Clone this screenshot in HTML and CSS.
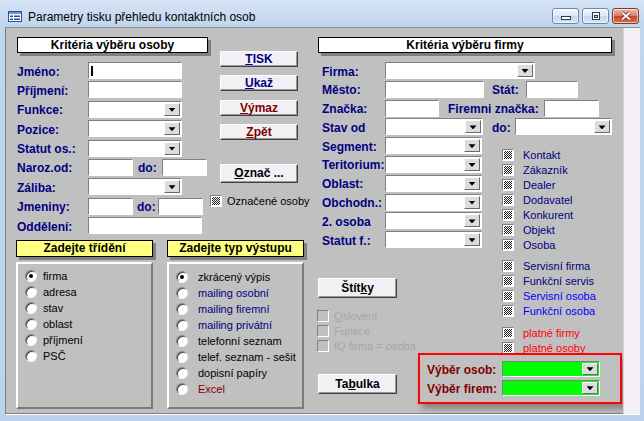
FILE: index.html
```html
<!DOCTYPE html>
<html lang="cs">
<head>
<meta charset="utf-8">
<title>Parametry tisku přehledu kontaktních osob</title>
<link rel="stylesheet" href="styles.css">
</head>
<body>
<div class="window">
  <div class="titlebar">
    <svg class="appicon" width="14" height="11" viewBox="0 0 14 11">
      <rect x="0.5" y="0.5" width="13" height="10" fill="#fff" stroke="#2a4f8f"/>
      <rect x="1" y="1" width="12" height="2" fill="#6f94cc"/>
      <rect x="2" y="4.5" width="3" height="1.5" fill="#2a4f8f"/>
      <rect x="6" y="4.5" width="6" height="1.5" fill="#2a4f8f"/>
      <rect x="2" y="7.5" width="3" height="1.5" fill="#2a4f8f"/>
      <rect x="6" y="7.5" width="6" height="1.5" fill="#2a4f8f"/>
    </svg>
    <span class="title">Parametry tisku přehledu kontaktních osob</span>
    <div class="winbtns">
      <div class="wb">
        <svg width="12" height="10" viewBox="0 0 12 10"><rect x="1.5" y="5.5" width="9" height="3" fill="#fff" stroke="#2b3a55"/></svg>
      </div>
      <div class="wb">
        <svg width="12" height="10" viewBox="0 0 12 10"><rect x="2.5" y="1.5" width="7" height="7" fill="none" stroke="#2b3a55"/><rect x="3.5" y="2.5" width="5" height="5" fill="none" stroke="#fff"/><rect x="4.5" y="4.5" width="3" height="2" fill="none" stroke="#2b3a55"/></svg>
      </div>
      <div class="wb close">
        <svg width="12" height="10" viewBox="0 0 12 10"><path d="M2 1.5 L10 8.5 M10 1.5 L2 8.5" stroke="#6b2a1c" stroke-width="3.4"/><path d="M2 1.5 L10 8.5 M10 1.5 L2 8.5" stroke="#fff" stroke-width="1.8"/></svg>
      </div>
    </div>
  </div>

  <div class="frame">
    <div class="client">
      <div class="colA">
        <div class="topA">
          <div class="persons">
            <div class="hdr">Kritéria výběru osoby</div>
            <div class="fields fields-a">
              <div class="row"><span class="lbl">Jméno:</span><span class="inp text w94"><span class="caret"></span></span></div>
              <div class="row"><span class="lbl">Příjmení:</span><span class="inp w94"></span></div>
              <div class="row"><span class="lbl">Funkce:</span><span class="inp w94"><span class="dd"></span></span></div>
              <div class="row"><span class="lbl">Pozice:</span><span class="inp w94"><span class="dd"></span></span></div>
              <div class="row"><span class="lbl">Statut os.:</span><span class="inp w94"><span class="dd"></span></span></div>
              <div class="row"><span class="lbl">Naroz.od:</span><span class="inp w45"></span><span class="lbl do1">do:</span><span class="inp w45"></span></div>
              <div class="row"><span class="lbl">Záliba:</span><span class="inp w94"><span class="dd"></span></span></div>
              <div class="row"><span class="lbl">Jmeniny:</span><span class="inp w45"></span><span class="lbl do2">do:</span><span class="inp w45"></span></div>
              <div class="row"><span class="lbl">Oddělení:</span><span class="inp w114"></span></div>
            </div>
          </div>
          <div class="actions">
            <div class="btn navy first"><u>T</u>ISK</div>
            <div class="btn navy"><u>U</u>kaž</div>
            <div class="btn maroon"><u>V</u>ýmaz</div>
            <div class="btn maroon"><u>Z</u>pět</div>
            <div class="btn tall oznac"><u>O</u>znač ...</div>
            <div class="check marked"><span class="chk on"></span><span class="ctext">Označené osoby</span></div>
          </div>
        </div>
        <div class="bottomA">
          <div class="grp sort">
            <div class="ghdr">Zadejte třídění</div>
            <div class="panel">
              <div class="opt"><span class="radio on"></span>firma</div>
              <div class="opt"><span class="radio"></span>adresa</div>
              <div class="opt"><span class="radio"></span>stav</div>
              <div class="opt"><span class="radio"></span>oblast</div>
              <div class="opt"><span class="radio"></span>příjmení</div>
              <div class="opt"><span class="radio"></span>PSČ</div>
            </div>
          </div>
          <div class="grp out">
            <div class="ghdr">Zadejte typ výstupu</div>
            <div class="panel">
              <div class="opt"><span class="radio on"></span>zkrácený výpis</div>
              <div class="opt navy-t"><span class="radio"></span>mailing osobní</div>
              <div class="opt navy-t"><span class="radio"></span>mailing firemní</div>
              <div class="opt navy-t"><span class="radio"></span>mailing privátní</div>
              <div class="opt"><span class="radio"></span>telefonní seznam</div>
              <div class="opt"><span class="radio"></span>telef. seznam - sešit</div>
              <div class="opt"><span class="radio"></span>dopisní papíry</div>
              <div class="opt maroon-t"><span class="radio"></span>Excel</div>
            </div>
          </div>
        </div>
      </div>

      <div class="colB">
        <div class="hdr hdr-b">Kritéria výběru firmy</div>
        <div class="fields fields-b">
          <div class="row"><span class="lbl">Firma:</span><span class="inp w150"><span class="dd"></span></span></div>
          <div class="row"><span class="lbl">Město:</span><span class="inp w99"></span><span class="lbl stat">Stát:</span><span class="inp w52"></span></div>
          <div class="row"><span class="lbl">Značka:</span><span class="inp w54"></span><span class="lbl fzn">Firemni značka:</span><span class="inp w55"></span></div>
          <div class="row"><span class="lbl">Stav od</span><span class="inp w98"><span class="dd"></span></span><span class="lbl do3">do:</span><span class="inp w97"><span class="dd"></span></span></div>
          <div class="split">
            <div class="sleft">
              <div class="fields fields-s">
                <div class="row"><span class="lbl">Segment:</span><span class="inp w97"><span class="dd"></span></span></div>
                <div class="row"><span class="lbl">Teritorium:</span><span class="inp w97"><span class="dd"></span></span></div>
                <div class="row"><span class="lbl">Oblast:</span><span class="inp w97"><span class="dd"></span></span></div>
                <div class="row"><span class="lbl">Obchodn.:</span><span class="inp w97"><span class="dd"></span></span></div>
                <div class="row"><span class="lbl">2. osoba</span><span class="inp w97"><span class="dd"></span></span></div>
                <div class="row"><span class="lbl">Statut f.:</span><span class="inp w97"><span class="dd"></span></span></div>
              </div>
              <div class="btn big stitky">Štít<u>k</u>y</div>
              <div class="dischecks">
                <div class="check dis"><span class="chk"></span><span class="ctext"><u>O</u>slovení</span></div>
                <div class="check dis"><span class="chk"></span><span class="ctext">Funkce</span></div>
                <div class="check dis"><span class="chk"></span><span class="ctext">IQ firma = osoba</span></div>
              </div>
            </div>
            <div class="sright">
              <div class="cgroup">
                <div class="check navy-t"><span class="chk on"></span><span class="ctext">Kontakt</span></div>
                <div class="check navy-t"><span class="chk on"></span><span class="ctext">Zákazník</span></div>
                <div class="check navy-t"><span class="chk on"></span><span class="ctext">Dealer</span></div>
                <div class="check navy-t"><span class="chk on"></span><span class="ctext">Dodavatel</span></div>
                <div class="check navy-t"><span class="chk on"></span><span class="ctext">Konkurent</span></div>
                <div class="check navy-t"><span class="chk on"></span><span class="ctext">Objekt</span></div>
                <div class="check navy-t"><span class="chk on"></span><span class="ctext">Osoba</span></div>
              </div>
              <div class="cgroup g2">
                <div class="check navy-t"><span class="chk on"></span><span class="ctext">Servisní firma</span></div>
                <div class="check navy-t"><span class="chk on"></span><span class="ctext">Funkční servis</span></div>
                <div class="check blue-t"><span class="chk on"></span><span class="ctext">Servisní osoba</span></div>
                <div class="check blue-t"><span class="chk on"></span><span class="ctext">Funkční osoba</span></div>
              </div>
              <div class="cgroup g3">
                <div class="check red-t"><span class="chk on"></span><span class="ctext">platné firmy</span></div>
                <div class="check red-t"><span class="chk on"></span><span class="ctext">platné osoby</span></div>
              </div>
            </div>
          </div>
        </div>
        <div class="bottomB">
          <div class="btn big tabulka">Ta<u>b</u>ulka</div>
          <div class="redbox">
            <div class="row"><span class="lbl">Výběr osob:</span><span class="inp green w98"><span class="dd"></span></span></div>
            <div class="row"><span class="lbl">Výběr firem:</span><span class="inp green w98"><span class="dd"></span></span></div>
          </div>
        </div>
      </div>
    </div>
    <div class="strip"></div>
  </div>
</div>
</body>
</html>
```

FILE: styles.css
```css
* { box-sizing: border-box; margin: 0; padding: 0; }
html, body { width: 644px; height: 421px; overflow: hidden; }
body {
  background: #bcd2ee;
  font-family: "Liberation Sans", Arial, sans-serif;
  color: #000;
}
.window {
  width: 644px;
  height: 421px;
  display: flex;
  flex-direction: column;
  background: linear-gradient(#d6e3f5 0, #c0d5ef 27px, #bcd2ee 100%);
}

/* title bar */
.titlebar {
  height: 27px;
  display: flex;
  align-items: flex-start;
  padding-left: 8px;
  flex: none;
}
.appicon { margin-top: 11px; flex: none; }
.title {
  margin-left: 6px;
  margin-top: 10px;
  font-size: 12px;
  line-height: 14px;
  white-space: nowrap;
}
.winbtns {
  margin-left: auto;
  margin-right: 5px;
  margin-top: 8px;
  display: flex;
  gap: 3px;
}
.wb {
  width: 27px;
  height: 16px;
  border-radius: 3px;
  border: 1px solid #6c86ad;
  display: flex;
  align-items: center;
  justify-content: center;
  background: linear-gradient(#f1f5fb, #dbe6f4 50%, #c6d7ee 51%, #d6e3f4);
  box-shadow: inset 0 0 0 1px rgba(255,255,255,.6);
}
.wb.close {
  border-color: #7e3b2c;
  background: linear-gradient(#eeb9a9, #dc7c63 50%, #c7442b 51%, #d8704f);
}

/* frame / client */
.frame {
  flex: none;
  height: 388px;
  margin: 0 4px 0 5px;
  display: flex;
  border-left: 1px solid #7d7d7d;
  border-top: 1px solid #8f8f8f;
  border-bottom: 1px solid #fff;
}
.client {
  width: 617px;
  height: 100%;
  background: #c0c0c0;
  border-bottom: 1px solid #808080;
  display: flex;
  padding: 9px 0 0 11px;
}
.strip {
  flex: 1;
  background: #f3eff4;
  border-left: 1px solid #d8d4da;
}

/* headers */
.hdr {
  height: 16px;
  border: 1px solid #000;
  background: #fff;
  box-shadow: 3px 3px 0 #808080;
  font-weight: bold;
  font-size: 12px;
  line-height: 14px;
  text-align: center;
  white-space: nowrap;
}

/* column A */
.colA { width: 287px; flex: none; }
.topA { display: flex; align-items: flex-start; }
.persons { width: 191px; flex: none; }
.fields { display: flex; flex-direction: column; }
.fields-a { margin-top: 9px; gap: 2.4px; }
.row { display: flex; align-items: center; height: 17px; }
.lbl {
  font-weight: bold;
  font-size: 12px;
  color: #000080;
  flex: none;
  white-space: nowrap;
  padding-top: 2px;
}
.persons .lbl { width: 71px; }
.persons .do1 { width: 24px; margin-left: 5px; }
.persons .do2 { width: 21px; margin-left: 4px; }

.inp {
  height: 17px;
  background: #fff;
  border: 1px solid;
  border-color: #808080 #fff #fff #808080;
  flex: none;
  display: flex;
  justify-content: flex-end;
  padding: 1px;
}
.inp.text { justify-content: flex-start; align-items: center; }
.caret { width: 2px; height: 10px; background: #000; margin-left: 1px; }
.inp.green { background: #00ff00; height: 16px; }
.w45 { width: 45px; }
.w52 { width: 52px; }
.w54 { width: 54px; }
.w55 { width: 55px; }
.w94 { width: 94px; }
.w97 { width: 97px; }
.w98 { width: 98px; }
.w99 { width: 99px; }
.w114 { width: 114px; }
.w150 { width: 150px; }

.dd {
  width: 16px;
  height: 100%;
  background: #dcdbe0;
  border: 1px solid;
  border-color: #fff #6a6a6a #6a6a6a #fff;
  display: flex;
  align-items: flex-end;
  justify-content: center;
  padding-bottom: 3px;
}
.dd::after {
  content: "";
  width: 7px;
  height: 4px;
  background: #000;
  clip-path: polygon(0 0, 100% 0, 50% 100%);
}

/* buttons */
.actions {
  margin-left: 2px;
  width: 88px;
  flex: none;
  display: flex;
  flex-direction: column;
  align-items: flex-start;
}
.btn {
  width: 78px;
  height: 16px;
  background: #f2f0f5;
  border: 1px solid;
  border-color: #fff #404040 #404040 #fff;
  box-shadow: inset -1px -1px 0 #9a9a9a;
  font-weight: bold;
  font-size: 12px;
  line-height: 14px;
  text-align: center;
  white-space: nowrap;
}
.actions .btn { margin-left: 10px; margin-top: 8.4px; }
.actions .btn.first { margin-top: 14px; }
.actions .btn.oznac { margin-top: 23.8px; height: 19px; line-height: 17px; }
.btn.navy { color: #000080; }
.btn.maroon { color: #800000; }
.btn.big { width: 79px; height: 20px; line-height: 18px; }
.btn u { text-decoration-thickness: 1px; text-underline-offset: 1px; }

/* checkboxes */
.check {
  display: flex;
  align-items: center;
  height: 15px;
  font-size: 11px;
  white-space: nowrap;
}
.chk {
  width: 12px;
  height: 12px;
  flex: none;
  background: #fff;
  border: 1px solid;
  border-color: #808080 #fff #fff #808080;
  padding: 1px;
}
.chk.on::after {
  content: "";
  display: block;
  width: 8px;
  height: 8px;
  background: repeating-conic-gradient(#1a1a1a 0 25%, #fff 0 50%) 0 0 / 2px 2px;
}
.check.marked { margin-top: 11px; }
.check.marked .ctext { margin-left: 5px; }
.check.dis .chk { background: transparent; }
.check.dis .ctext { margin-left: 5px; color: #a6a6a6; }
.sright .ctext { margin-left: 9px; }
.navy-t { color: #000080; }
.blue-t { color: #0000ff; }
.red-t { color: #ff0000; }
.maroon-t { color: #800000; }

/* radio groups */
.bottomA {
  display: flex;
  gap: 14px;
  margin-left: -1px;
  margin-top: 6px;
}
.grp { width: 137px; flex: none; }
.ghdr {
  height: 17px;
  background: #ffff80;
  border: 1px solid #000;
  box-shadow: 3px 3px 0 #808080;
  font-weight: bold;
  font-size: 12px;
  line-height: 15px;
  text-align: center;
  white-space: nowrap;
}
.panel {
  margin-top: 5px;
  height: 147px;
  border: 2px solid;
  border-color: #fff #7a7a7a #7a7a7a #fff;
  padding-top: 4px;
}
.out .panel { padding-top: 5px; }
.opt {
  display: flex;
  align-items: center;
  height: 16px;
  font-size: 11px;
  padding-left: 7px;
  white-space: nowrap;
}
.radio {
  width: 12px;
  height: 12px;
  flex: none;
  border-radius: 50%;
  background: #fff;
  border: 1px solid;
  border-color: #808080 #f4f4f4 #f4f4f4 #808080;
  box-shadow: inset 1px 1px 0 #404040;
  margin-right: 6px;
  display: flex;
  align-items: center;
  justify-content: center;
}
.out .radio { margin-right: 10px; }
.radio.on::after {
  content: "";
  width: 4px;
  height: 4px;
  border-radius: 50%;
  background: #000;
}

/* column B */
.colB { width: 304px; flex: none; margin-left: 14px; }
.hdr-b { width: 294px; }
.fields-b { margin-top: 9px; padding-left: 4px; gap: 1.8px; }
.colB .lbl { width: 63px; }
.colB .stat { width: 34px; margin-left: 8px; }
.colB .fzn { width: 96px; margin-left: 9px; }
.colB .do3 { width: 23px; margin-left: 9px; }
.split { display: flex; height: 216px; }
.sleft { width: 180px; flex: none; }
.fields-s { gap: 1.8px; }
.stitky { margin-left: -4px; margin-top: 29.8px; }
.dischecks { margin-left: -5px; margin-top: 11px; }
.sright { margin-top: 10.3px; }
.cgroup.g2 { margin-top: 6px; }
.cgroup.g3 { margin-top: 7px; }

.bottomB { display: flex; align-items: flex-start; }
.tabulka { margin-top: 21px; }
.redbox {
  margin-left: 21px;
  width: 204px;
  height: 51px;
  border: 2px solid #ff0000;
  box-shadow: 4px 5px 6px rgba(0, 0, 0, 0.3);
  padding: 6px 0 0 7px;
  display: flex;
  flex-direction: column;
  gap: 3px;
}
.redbox .row { height: 16px; }
.colB .redbox .lbl { color: #800000; width: 75px; }
```
